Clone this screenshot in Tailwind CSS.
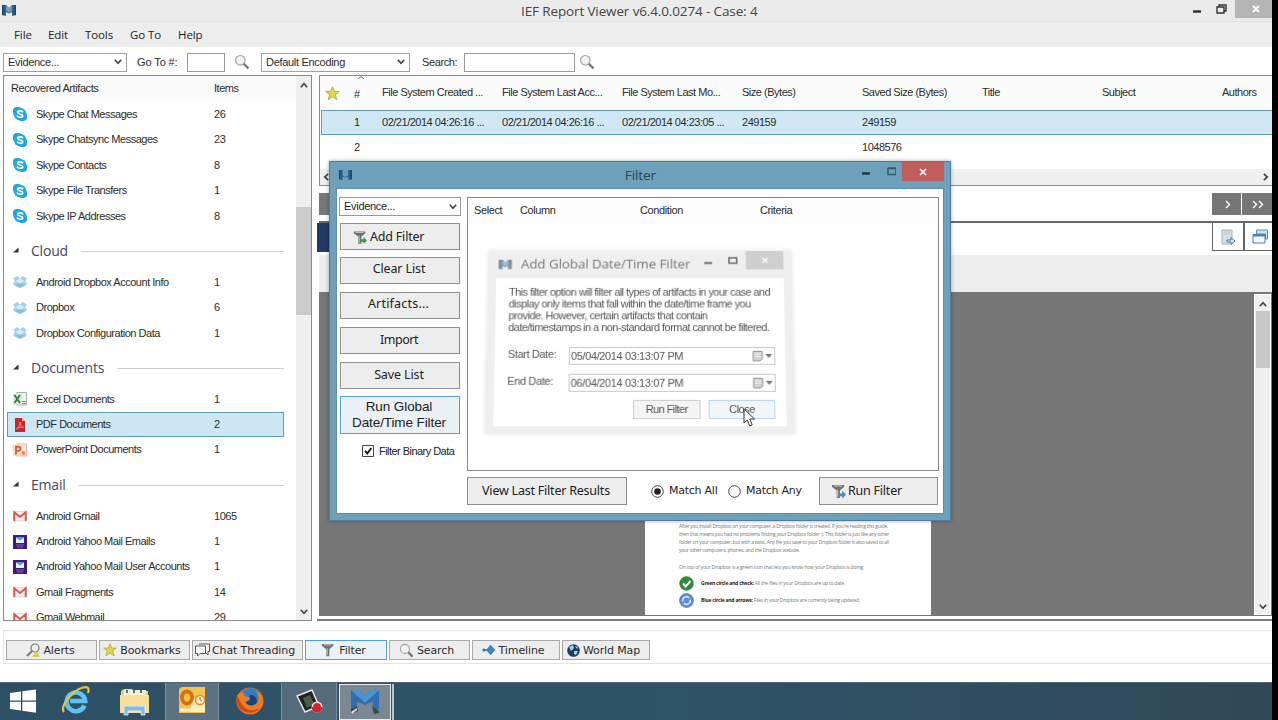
<!DOCTYPE html>
<html lang="en">
<head>
  <meta charset="UTF-8" />
  <meta name="viewport" content="width=device-width, initial-scale=1.0"/>
  <title>IEF Report Viewer v6.4.0.0274 - Case: 4</title>
  <script src="https://cdn.jsdelivr.net/npm/@tailwindcss/browser@4"></script>
</head>
<body class="w-[1278px] h-[720px] overflow-hidden bg-black font-['Liberation_Sans',sans-serif] text-[11px] leading-none tracking-[-0.480px] text-[#2b2b2b]">

  <!-- icon sprite -->
  <svg class="hidden">
    <symbol id="logo" viewBox="0 0 14 13"><path d="M0 1h4l3 3 3-3h4v10l-4 1V8L7 9.500 4 8v4l-4-1z" fill="#2f5f85"/><path d="M0 1h1.500v10.300L0 11zM12.500 1H14v10l-1.500.3z" fill="#24445f"/><path d="M4 1l3 3 3-3v5.500L7 9 4 6.500z" fill="#6d9fc4"/></symbol>
    <symbol id="skype" viewBox="0 0 14 14"><rect x="0" y="0" width="9" height="9" rx="4" fill="#1aa3dd"/><rect x="5" y="5" width="9" height="9" rx="4" fill="#1aa3dd"/><circle cx="7" cy="7" r="6.3" fill="#22a9e0"/><path d="M9.600 4.800C9 3.600 4.700 3.400 4.700 5.300c0 2.100 5 1.100 5 3.400 0 2-4.600 2-5.400.3" fill="none" stroke="#fff" stroke-width="1.600" stroke-linecap="round"/></symbol>
    <symbol id="dropbox" viewBox="0 0 14 14"><path d="M4.200 1L7 3.300 9.800 1 14 3.700 12 6l1.500 2v2L7 13.200.5 10V8L2 6 0 3.700z" fill="#a3d0ec"/><path d="M7 3.300L11.500 6 7 8.800 2.500 6z" fill="#d5ecf9"/><path d="M2 9.500l5-1 5 1-5 3z" fill="#86bfe2"/></symbol>
    <symbol id="excel" viewBox="0 0 14 14"><rect x="4" y=".5" width="9.500" height="12.500" fill="#f1f6f1" stroke="#8aa88a" stroke-width=".8"/><path d="M0 2l9-1v10l-9 2z" fill="#dcebd9"/><path d="M1.500 3l5.500 8M7 3l-5.500 8" stroke="#2f7d3a" stroke-width="1.800"/><path d="M9 9.500h4M9 11.500h4" stroke="#5e9b62"/></symbol>
    <symbol id="pdf" viewBox="0 0 14 14"><path d="M2 0h7l3 3v11H2z" fill="#c9252b"/><path d="M9 0l3 3H9z" fill="#f3b8b8"/><path d="M3.500 11c2-1 4-5 3.500-7 0 2 1 4.500 3.500 5.300-2.500-.6-5 .4-7 1.700z" fill="none" stroke="#eb9a9a" stroke-width=".9"/></symbol>
    <symbol id="ppt" viewBox="0 0 14 14"><rect x="4" y="1" width="9.500" height="12" fill="#fbe9e0" stroke="#e5a283" stroke-width=".8"/><path d="M0 2l9-1v11l-9 1z" fill="#fbd9c8"/><path d="M3 11.500V3.700h2.300a2 2 0 010 4.300H3" fill="none" stroke="#d4572a" stroke-width="1.700"/><circle cx="10.500" cy="10" r="2" fill="#e58a5f"/></symbol>
    <symbol id="gmail" viewBox="0 0 14 14"><rect x=".5" y="2.500" width="13" height="9.500" fill="#f7f0ef" stroke="#d9c3c0" stroke-width=".6"/><path d="M1.300 12V3.200L7 8l5.700-4.800V12" fill="none" stroke="#d9574c" stroke-width="1.900"/></symbol>
    <symbol id="yahoo" viewBox="0 0 14 14"><rect width="14" height="14" fill="#3d1b7c"/><rect x="3" y="2.500" width="8" height="5.500" fill="#e6f2fb"/><path d="M3 2.500l4 3 4-3z" fill="#43a0dc"/><path d="M3 10h8M4 12h6" stroke="#8a70bd" stroke-width=".9"/></symbol>
    <symbol id="mag" viewBox="0 0 16 16"><path d="M9.500 9.500l5 5" stroke="#777" stroke-width="2.400"/><circle cx="6.300" cy="6.300" r="4.800" fill="#edf2f5" stroke="#a3a3a3" stroke-width="1.200"/><path d="M3.800 6a2.600 2.600 0 012.500-2.500" stroke="#fff" fill="none"/></symbol>
    <symbol id="star" viewBox="0 0 16 16"><path d="M8 .8l2 5h5.300l-4.200 3.400 1.600 5.500L8 11.500l-4.700 3.200 1.600-5.500L.7 5.800H6z" fill="#e3d843" stroke="#a9a13a" stroke-width=".8"/></symbol>
    <symbol id="funnel" viewBox="0 0 16 16"><path d="M1 1h13v2L9.500 7v8H6V7L1 3z" fill="#6f6f6f"/><path d="M3 2.200h9M7 6v8" stroke="#d5d5d5"/></symbol>
    <symbol id="down" viewBox="0 0 8 6"><path d="M.8 .8L4 4.300 7.200 .8" fill="none" stroke="#444" stroke-width="1.700"/></symbol>
    <symbol id="cal" viewBox="0 0 22 12"><path d="M1 1.500h9V9l-2 2H1z" fill="#c9c9c9" stroke="#777"/><path d="M2 4h7M2 6.500h7" stroke="#eee"/><path d="M13 4h7l-3.500 4z" fill="#555"/></symbol>
  </svg>

  <div class="w-[1272px] h-[720px] flex flex-col bg-white overflow-hidden">

    <!-- title bar -->
    <header class="relative h-[22px] shrink-0 bg-[#ebebeb] border-b border-[#e2e2e2] flex items-start justify-between pl-[2px]">
      <svg class="w-[14px] h-[13px] mt-[4px]"><use href="#logo"/></svg>
      <h1 class="absolute left-[521px] top-[5px] font-['Open_Sans',sans-serif] text-[13.500px] tracking-[-0.130px] text-[#444] whitespace-nowrap">IEF Report Viewer v6.4.0.0274 - Case: 4</h1>
      <div class="flex items-start">
        <svg class="w-[8px] h-[14px] mr-[15px]" viewBox="0 0 8 14"><path d="M0 11.500h8" stroke="#333" stroke-width="2.500"/></svg>
        <svg class="w-[11px] h-[14px] mr-[8px]" viewBox="0 0 11 14"><path d="M3 7V5h7v6H8M1 7h7v6H1z" fill="none" stroke="#333" stroke-width="1.400"/></svg>
        <div class="w-[37px] h-[18px] bg-[#b5b5b5] flex items-center pl-[17px]"><svg class="w-[8px] h-[8px]" viewBox="0 0 8 8"><path d="M1 1l6 6M7 1L1 7" stroke="#fff" stroke-width="1.800"/></svg></div>
      </div>
    </header>

    <!-- menu -->
    <nav class="h-[25px] shrink-0 bg-[#ededed] flex items-center pl-[14px] font-['Open_Sans',sans-serif] text-[11.500px] tracking-[-0.1px] text-[#222]">
      <span class="w-[34px]">File</span><span class="w-[37px]">Edit</span><span class="w-[45px]">Tools</span><span class="w-[48px]">Go To</span><span>Help</span>
    </nav>

    <!-- toolbar -->
    <div class="h-[28px] shrink-0 flex items-center pl-[3px]">
      <div class="w-[124px] h-[19px] mt-[2px] border border-[#a0a0a0] flex items-center justify-between pl-[4px] pr-[4px]"><span class="tracking-[-0.3px]">Evidence...</span><svg class="w-[8px] h-[6px]"><use href="#down"/></svg></div>
      <span class="ml-[10px] mt-[3px] w-[50px] tracking-[-0.1px]">Go To #:</span>
      <div class="w-[38px] h-[19px] mt-[2px] border border-[#999]"></div>
      <svg class="w-[16px] h-[16px] ml-[9px] mt-[2px]"><use href="#mag"/></svg>
      <div class="ml-[11px] w-[149px] h-[19px] mt-[2px] border border-[#a0a0a0] flex items-center justify-between pl-[4px] pr-[4px]"><span class="tracking-[-0.3px]">Default Encoding</span><svg class="w-[8px] h-[6px]"><use href="#down"/></svg></div>
      <span class="ml-[12px] mt-[3px] w-[42px] tracking-[-0.380px]">Search:</span>
      <div class="w-[111px] h-[19px] mt-[2px] border border-[#999]"></div>
      <svg class="w-[16px] h-[16px] ml-[4px] mt-[2px]"><use href="#mag"/></svg>
    </div>

    <main class="h-[546px] shrink-0 flex pl-[3px]">
      <!-- artifact tree -->
      <aside class="w-[309px] h-[546px] border border-[#8a8a8a] flex overflow-hidden">
        <div class="flex-1 overflow-hidden">
          <div class="h-[25.800px] bg-[#fafafa] flex items-center pl-[7px]"><span class="w-[203px] tracking-[-0.420px]">Recovered Artifacts</span><span>Items</span></div>
          <div id="tree"></div>
        </div>
        <div class="w-[15px] bg-[#f0f0f0] flex flex-col items-center">
          <svg class="w-[8px] h-[6px] mt-[6px] rotate-180"><use href="#down"/></svg>
          <div class="w-full h-[108px] mt-[119px] bg-[#cbcbcb]"></div>
          <svg class="w-[8px] h-[6px] mt-auto mb-[5px]"><use href="#down"/></svg>
        </div>
      </aside>

      <section class="ml-[5px] w-[955px] h-[546px] flex flex-col">
        <!-- report grid -->
        <div class="ml-[2px] h-[111px] border-y border-l border-[#8a8a8a] flex flex-col overflow-hidden">
          <div class="h-[34px] bg-[#fbfbfb] flex items-center">
            <svg class="w-[15px] h-[15px] ml-[5px] mr-[14px] shrink-0"><use href="#star"/></svg>
            <span class="relative w-[21px] shrink-0 pt-[2px] mr-[7px]"><svg class="absolute left-[4px] -top-[11px] w-[6px] h-[3px]" viewBox="0 0 6 3"><path d="M0 3l3-2.500L6 3" fill="none" stroke="#666"/></svg>#</span>
            <div id="heads" class="flex pb-[1px]"></div>
          </div>
          <div class="h-[25px] border border-r-0 border-[#5f9db5] bg-[#cfe8f3] flex items-center ml-[1px]"><span class="w-[60px] pl-[32px]">1</span><div id="row1" class="flex"></div></div>
          <div class="h-[25px] flex items-center pl-[2px]"><span class="w-[60px] pl-[32px]">2</span><div id="row2" class="flex"></div></div>
          <div class="mt-auto h-[16px] bg-[#f0f0f0] flex items-center justify-between pl-[2px] pr-[2px]">
            <svg class="w-[8px] h-[6px] rotate-90"><use href="#down"/></svg>
            <svg class="w-[8px] h-[6px] -rotate-90"><use href="#down"/></svg>
          </div>
        </div>

        <!-- record navigation -->
        <div class="h-[37px] border-b-2 border-[#696969] flex items-center ml-[2px]">
          <div class="w-[200px] h-[22px] bg-[#777]"></div>
          <div class="ml-auto w-[29px] h-[22px] mt-[1px] bg-[#757575] flex items-center justify-center"><svg class="w-[6px] h-[9px] ml-[3px]" viewBox="0 0 6 9"><path d="M1 1l3.500 3.500L1 8" fill="none" stroke="#fff" stroke-width="1.400"/></svg></div>
          <div class="ml-[1px] w-[30px] h-[22px] mt-[1px] bg-[#757575] flex items-center justify-center"><svg class="w-[12px] h-[9px] ml-[2px]" viewBox="0 0 12 9"><path d="M1 1l3.500 3.500L1 8M7 1l3.500 3.500L7 8" fill="none" stroke="#fff" stroke-width="1.400"/></svg></div>
        </div>
        <div class="h-[32px] flex">
          <div class="w-[200px] h-[29px] bg-[#1f3a66]"></div>
          <div class="ml-auto w-[32px] h-[28px] border border-t-0 border-[#666] flex items-center justify-center">
            <svg class="w-[15px] h-[16px]" viewBox="0 0 15 16"><path d="M1 1h10v14H1z" fill="#d4dfe8" stroke="#9fb0bf"/><path d="M3 3h6M3 5h6" stroke="#b7c6d2"/><path d="M6 11h4V8.500l4 3.500-4 3.500V13H6z" fill="#cfe8fa" stroke="#3a7cab"/></svg>
          </div>
          <div class="w-[28px] h-[28px] border-b border-l border-[#666] flex items-center pl-[7px]">
            <svg class="w-[16px] h-[15px]" viewBox="0 0 16 15"><path d="M4.500 1h11v9h-2V5h-9z" fill="#cbe2f3" stroke="#4d8fbd"/><path d="M1 5.500h12v8.500H1z" fill="#f4f9fd" stroke="#4d7fa6"/><path d="M1 6.500h12" stroke="#3f86bb" stroke-width="2"/></svg>
          </div>
        </div>
        <div class="h-[37px] bg-[#ededed] ml-[2px]"></div>

        <!-- document preview -->
        <div class="h-[324px] bg-[#777] ml-[2px] flex items-end pl-[326px]">
          <article class="w-[286px] h-[320px] mb-[1px] bg-white pl-[34px] pb-[2px] flex flex-col justify-end font-['Open_Sans',sans-serif] text-[5px] leading-[8.300px] tracking-[-0.240px] text-[#777] whitespace-nowrap">
            <p>After you install Dropbox on your computer, a Dropbox folder is created. If you're reading this guide,</p>
            <p>then that means you had no problems finding your Dropbox folder :). This folder is just like any other</p>
            <p>folder on your computer, but with a twist. Any file you save to your Dropbox folder is also saved to all</p>
            <p>your other computers, phones, and the Dropbox website.</p>
            <p class="mt-[8px] tracking-[-0.180px]">On top of your Dropbox is a green icon that lets you know how your Dropbox is doing:</p>
            <div class="flex items-center h-[17px] mt-[4px] tracking-[-0.220px]">
              <svg class="w-[15px] h-[15px] mr-[7px]" viewBox="0 0 15 15"><circle cx="7.500" cy="7.500" r="7.200" fill="#2f8b3a"/><path d="M4 7.500l2.700 3L11.500 5" fill="none" stroke="#fff" stroke-width="2"/></svg>
              <p><b class="text-[#222]">Green circle and check:</b> All the files in your Dropbox are up to date.</p>
            </div>
            <div class="flex items-center h-[17px] mb-[4px] tracking-[-0.220px]">
              <svg class="w-[15px] h-[15px] mr-[7px]" viewBox="0 0 15 15"><circle cx="7.500" cy="7.500" r="7" fill="#5d8be0" stroke="#476cb8" stroke-width=".6"/><path d="M3.800 8.300a3.700 3.700 0 016.300-3.400M11.200 6.700a3.700 3.700 0 01-6.300 3.400" fill="none" stroke="#dbe8fd" stroke-width="1.600"/></svg>
              <p><b class="text-[#222]">Blue circle and arrows:</b> Files in your Dropbox are currently being updated.</p>
            </div>
          </article>
          <div class="ml-auto mr-[1px] mb-[1px] w-[17px] h-[321px] bg-[#f0f0f0] border border-white flex flex-col items-center">
            <svg class="w-[8px] h-[6px] mt-[6px] rotate-180"><use href="#down"/></svg>
            <div class="w-[14px] h-[57px] mt-[4px] bg-[#c8c8c8]"></div>
            <svg class="w-[8px] h-[6px] mt-auto mb-[4px]"><use href="#down"/></svg>
          </div>
        </div>
        <div class="mt-[3px] h-[2px] bg-[#7d7d7d]"></div>
      </section>
    </main>

    <!-- bottom tabs -->
    <div class="mt-[9px] ml-[3px] h-[34px] shrink-0 border border-r-0 border-[#e3e3e3] flex items-center gap-[2px] pl-[2px] pt-[6px] font-['DejaVu_Sans',sans-serif] text-[11px] tracking-[-0.120px]">
      <div class="w-[91px] h-[20px] bg-[#ededed] border border-[#a9a9a9] flex items-center justify-center gap-[2px] pr-[2px]">
        <svg class="w-[15px] h-[15px]" viewBox="0 0 15 15"><circle cx="9" cy="5" r="4" fill="#eee" stroke="#777" stroke-width="1.200"/><path d="M6 8l-5 5" stroke="#777" stroke-width="2"/><path d="M10 8l4 6H6z" fill="#d9cf4a"/></svg>Alerts</div>
      <div class="w-[91px] h-[20px] bg-[#ededed] border border-[#a9a9a9] flex items-center justify-center gap-[3px] pr-[5px]"><svg class="w-[14px] h-[14px] shrink-0"><use href="#star"/></svg>Bookmarks</div>
      <div class="w-[111px] h-[20px] bg-[#ededed] border border-[#a9a9a9] flex items-center justify-center gap-[2px] pr-[5px] whitespace-nowrap">
        <svg class="w-[15px] h-[14px] shrink-0" viewBox="0 0 15 14"><path d="M4 1h10.500v7.500H13V12l-2-2" fill="#f5f5f5" stroke="#555"/><path d="M.5 3h10v7.500H5L2.500 13v-2.500h-2z" fill="#fafafa" stroke="#555"/></svg>Chat Threading</div>
      <div class="w-[82px] h-[20px] bg-[#eaf2fa] border border-[#569de5] flex items-center justify-center gap-[4px] pr-[5px]"><svg class="w-[14px] h-[14px]"><use href="#funnel"/></svg>Filter</div>
      <div class="w-[81px] h-[20px] bg-[#ededed] border border-[#a9a9a9] flex items-center justify-center gap-[3px] pr-[6px]"><svg class="w-[15px] h-[15px]"><use href="#mag"/></svg>Search</div>
      <div class="w-[88px] h-[20px] bg-[#ededed] border border-[#a9a9a9] flex items-center justify-center gap-[3px] pr-[6px]">
        <svg class="w-[14px] h-[12px]" viewBox="0 0 14 12"><path d="M2 6h10" stroke="#2f6fa8" stroke-width="1.500"/><path d="M8.500 .8L13.500 6l-5 5.200L4 6z" fill="#3f86c2"/><circle cx="2" cy="6" r="1.600" fill="#2f6fa8"/></svg>Timeline</div>
      <div class="w-[88px] h-[20px] bg-[#ededed] border border-[#a9a9a9] flex items-center justify-center gap-[3px] pr-[5px] whitespace-nowrap">
        <svg class="w-[13px] h-[13px] shrink-0" viewBox="0 0 13 13"><circle cx="6.500" cy="6.500" r="6.300" fill="#173f63"/><path d="M2 3l4-2 1 3-3 3zM7 7l4 0-2 4-2-1zM8 2l3 1-1 2z" fill="#a9cfe6"/></svg>World Map</div>
    </div>

    <!-- taskbar -->
    <footer class="mt-auto h-[38px] shrink-0 bg-linear-to-r from-[#2e5064] via-[#2f546a] to-[#2f4858] border-t border-[#54646f] flex items-center">
      <svg class="w-[26px] h-[24px] ml-[10px] mb-[2px]" viewBox="0 0 26 24"><path d="M0 4l11-1.500v9H0zM12.300 2.300L26 .5v11H12.300zM0 12.800h11v8.700L0 20zM12.300 12.800H26v11l-13.700-2z" fill="#fff"/></svg>
      <svg class="w-[30px] h-[30px] ml-[25px] mb-[4px]" viewBox="0 0 30 30"><path d="M23.500 20.500A9.300 9.300 0 1124.200 16H9" fill="none" stroke="#5cc3f2" stroke-width="4.600"/><path d="M3 27C-1 22 10 6 22 2.500c5-1.500 6.500 1 5 5.500" fill="none" stroke="#e9c43f" stroke-width="2.200"/></svg>
      <svg class="w-[31px] h-[30px] ml-[28px]" viewBox="0 0 31 30"><path d="M2 4l3-2h8l2 2h14v22H2z" fill="#e9cf77"/><path d="M5 3h22v5H5z" fill="#f4f0dc"/><path d="M8 3v3M15 3v3M22 3v3" stroke="#5b7a5b" stroke-width="2"/><path d="M1 8h29v18H1z" fill="#f5df95"/><path d="M5 28v-9h21v9h-4v-4H9v4z" fill="#7fbde6" stroke="#e3f2fb" stroke-width=".8"/></svg>
      <div class="w-[54px] h-full ml-[15px] bg-[#5b7381] border-x border-[#7b909c] flex items-center justify-center pb-[4px]">
        <svg class="w-[28px] h-[28px]" viewBox="0 0 28 28"><path d="M1 3l3-2h23v26H1z" fill="#f3c54c"/><path d="M13 12h14v14H13z" fill="#fbeab8"/><path d="M2 24l24 0" stroke="#fdf3d5" stroke-width="3"/><ellipse cx="9" cy="11.500" rx="5" ry="6" fill="none" stroke="#d96f1b" stroke-width="4"/><circle cx="22" cy="14" r="4.500" fill="#fff3d6" stroke="#e08a28" stroke-width="1.500"/><path d="M22 11v3l2 1" stroke="#b55d12" fill="none"/></svg>
      </div>
      <svg class="w-[28px] h-[28px] ml-[17px] mb-[2px]" viewBox="0 0 28 28"><circle cx="14" cy="14" r="13.500" fill="#e36c1b"/><circle cx="14.500" cy="11" r="10" fill="#2f7fc5"/><path d="M1 9c2-4 5-4 7-3-1 3 1 4 5 4 2 1-1 4-4 4 1 5 8 6 12 2 3-4 1-9-1-12 5 2 7.500 7 7 11-1 8-7 12-13 12C5 27-1 19 1 9z" fill="#ee7d1e"/><path d="M13 9c4-3 8 1 8 6-3 5-9 4-11 0 3 0 6-2 3-6z" fill="#1d4177"/><path d="M1 9c-1 6 1 12 6 15 6 3 13 2 17-3-5 3-12 3-16-1S4 12 1 9z" fill="#d2481a"/></svg>
      <div class="w-[56px] h-full ml-[17px] bg-[#536b7a] border-x border-[#7b909c] flex items-center justify-center pb-[2px]">
        <svg class="w-[28px] h-[26px]" viewBox="0 0 28 26"><path d="M2 8L17 2l7 16-14 6z" fill="#222" stroke="#e8e8e8" stroke-width="1.500"/><path d="M8 10l7-3 4 9-7 4z" fill="#45604a"/><circle cx="22" cy="19" r="5.500" fill="#e9e9e9"/><path d="M16.500 19a5.500 5.500 0 0011 0z" fill="#d2232a"/><circle cx="22" cy="19" r="4" fill="#d2232a"/></svg>
      </div>
      <div class="w-[52px] h-[36px] ml-[2px] bg-[#7b8791] border border-[#e6ebee] flex items-center justify-center">
        <svg class="w-[30px] h-[26px]" viewBox="0 0 30 26"><path d="M1 1h8l6 6 6-6h8v19l-6 2V13l-4 1-4 2-4-2-4-1v9l-6-2z" fill="#2f6fae"/><path d="M1 1h8l6 6 6-6h8L15 14z" fill="#4c93cf"/><path d="M1 20l6-3 1 5-7 3zM22 17l7 5v2l-5 1z" fill="#3a4650"/><path d="M1 23l6-4v2l-5 4z" fill="#d9dee2"/></svg>
      </div>
      <div class="w-[2px] h-[36px] ml-[1px] bg-[#b9c4cb]"></div>
    </footer>
  </div>

  <!-- filter window -->
  <div class="absolute left-[329px] top-[161px] w-[622px] h-[360px] bg-[#6ca0bb] border border-[#4c7e98] shadow-[0_0_4px_rgba(0,0,0,0.35)] px-[6px] pb-[6px] flex flex-col">
    <div class="h-[26px] shrink-0 flex items-start">
      <svg class="w-[15px] h-[12px] mt-[7px] ml-[2px]"><use href="#logo"/></svg>
      <span class="ml-[272px] mt-[7px] w-[236px] font-['Open_Sans',sans-serif] text-[13.500px] font-medium tracking-[-0.1px] text-[#2f4350]">Filter</span>
      <svg class="w-[8px] h-[14px] mr-[17px] ml-[3px]" viewBox="0 0 8 14"><path d="M0 11.500h8" stroke="#24343f" stroke-width="2.500"/></svg>
      <svg class="w-[10px] h-[14px] mr-[6px]" viewBox="0 0 10 14"><path d="M1 6.500h8v6H1zM1 6h8" fill="none" stroke="#35586b" stroke-width="1.500"/></svg>
      <div class="w-[42px] h-[19px] bg-[#c15c5c] flex items-center justify-center"><svg class="w-[8px] h-[8px]" viewBox="0 0 8 8"><path d="M1 1l6 6M7 1L1 7" stroke="#fff" stroke-width="1.700"/></svg></div>
    </div>
    <div class="flex-1 bg-white border border-[#5f8ea8] flex pt-[8px] pl-[2px]">
      <div class="w-[122px] flex flex-col font-['Noto_Sans',sans-serif] text-[12.500px] tracking-[-0.120px] text-[#222]">
        <div class="h-[19px] border border-[#999] flex items-center justify-between pl-[4px] pr-[3px] font-['Liberation_Sans',sans-serif] text-[11px] tracking-[-0.3px]">Evidence...<svg class="w-[8px] h-[6px]"><use href="#down"/></svg></div>
        <div class="mt-[7px] mx-[1px] h-[27px] border border-[#8f8f8f] bg-[#ededed] flex items-center pl-[12px] pt-[1px] gap-[3px]">
          <svg class="w-[14px] h-[15px]" viewBox="0 0 16 16"><path d="M1 1h13v2L9.500 7v8H6V7L1 3z" fill="#6f6f6f"/><path d="M3 2.200h9M7 6v8" stroke="#d5d5d5"/><path d="M8 10h4V7l4 4.500-4 4V13H8z" fill="#3f9b45"/></svg><span class="tracking-[-0.2px]">Add Filter</span></div>
        <div class="mt-[7px] mx-[1px] h-[27px] border border-[#8f8f8f] bg-[#ededed] flex items-center justify-center pb-[2px] pr-[2px]">Clear List</div>
        <div class="mt-[8px] mx-[1px] h-[27px] border border-[#8f8f8f] bg-[#ededed] flex items-center justify-center pb-[2px] pr-[3px] tracking-[0.2px]">Artifacts...</div>
        <div class="mt-[8px] mx-[1px] h-[27px] border border-[#8f8f8f] bg-[#ededed] flex items-center justify-center pr-[2px] tracking-[-0.5px]">Import</div>
        <div class="mt-[8px] mx-[1px] h-[27px] border border-[#8f8f8f] bg-[#ededed] flex items-center justify-center pr-[2px]">Save List</div>
        <div class="mt-[7px] mx-[1px] h-[38px] border border-[#569de5] bg-[#ebf1f7] flex items-center justify-center text-center pr-[2px] font-['Liberation_Sans',sans-serif] text-[13.500px] leading-[16px] tracking-[-0.1px]">Run Global<br>Date/Time Filter</div>
        <div class="mt-[11px] ml-[23px] flex items-center font-['Liberation_Sans',sans-serif] text-[11px] tracking-[-0.540px] whitespace-nowrap">
          <svg class="w-[12px] h-[12px] mr-[5px]" viewBox="0 0 12 12"><path d="M.5 .5h11v11H.5z" fill="#fff" stroke="#444"/><path d="M3 5.800l2.300 2.700L9.300 3" fill="none" stroke="#111" stroke-width="1.800"/></svg>Filter Binary Data</div>
      </div>
      <div class="ml-[6px] w-[472px] flex flex-col">
        <div class="h-[274px] border border-[#8a8a8a]">
          <div class="h-[25px] flex items-center pl-[6px] bg-[#fdfdfd] tracking-[-0.4px]"><span class="w-[46px]">Select</span><span class="w-[120px]">Column</span><span class="w-[120px]">Condition</span><span>Criteria</span></div>
        </div>
        <div class="mt-[6px] flex items-center font-['Noto_Sans',sans-serif] text-[12.500px] tracking-[-0.220px] text-[#222]">
          <div class="w-[160px] h-[28px] border border-[#8f8f8f] bg-[#ededed] flex items-center justify-center pr-[2px]">View Last Filter Results</div>
          <svg class="w-[13px] h-[13px] ml-[24px] mr-[5px]" viewBox="0 0 13 13"><circle cx="6.500" cy="6.500" r="5.800" fill="#fff" stroke="#444"/><circle cx="6.500" cy="6.500" r="3.300" fill="#222"/></svg>
          <span class="w-[59px] pb-[1px] font-['DejaVu_Sans',sans-serif] text-[11px] tracking-[-0.250px]">Match All</span>
          <svg class="w-[13px] h-[13px] mr-[5px]" viewBox="0 0 13 13"><circle cx="6.500" cy="6.500" r="5.800" fill="#fff" stroke="#444"/></svg>
          <span class="w-[73px] pb-[1px] font-['DejaVu_Sans',sans-serif] text-[11px] tracking-[-0.250px]">Match Any</span>
          <div class="w-[119px] h-[28px] border border-[#8f8f8f] bg-[#ededed] flex items-center pl-[11px] gap-[2px]">
            <svg class="w-[15px] h-[15px]" viewBox="0 0 16 16"><path d="M1 1h13v2L9.500 7v8H6V7L1 3z" fill="#6f6f6f"/><path d="M3 2.200h9M7 6v8" stroke="#d5d5d5"/><path d="M8 10h4V7l4 4.500-4 4V13H8z" fill="#3f8fc6"/></svg>Run Filter</div>
        </div>
      </div>
    </div>
  </div>

  <!-- global date filter, fading out as it closes -->
  <div class="absolute left-[487px] top-[249px] w-[306px] h-[184px] bg-[#efefef] [transform:perspective(1000px)_rotateX(8deg)] shadow-[0_0_5px_rgba(0,0,0,0.12)] flex flex-col text-[#555] px-[8px] pb-[7px]">
    <div class="h-[28px] shrink-0 flex items-start">
      <svg class="w-[14px] h-[12px] mt-[8px] ml-[2px] opacity-60"><use href="#logo"/></svg>
      <span class="ml-[9px] mt-[7px] w-[184px] whitespace-nowrap font-['Open_Sans',sans-serif] text-[13.500px] tracking-[-0.080px] text-[#777]">Add Global Date/Time Filter</span>
      <svg class="w-[8px] h-[14px] mr-[16px] ml-[5px]" viewBox="0 0 8 14"><path d="M0 12.500h8" stroke="#666" stroke-width="2"/></svg>
      <svg class="w-[10px] h-[14px] mr-[8px]" viewBox="0 0 10 14"><path d="M1 7h8v5.500H1z" fill="none" stroke="#666" stroke-width="1.500"/></svg>
      <div class="w-[38px] h-[19px] bg-[#cfcfcf] flex items-center justify-center shrink-0"><svg class="w-[7px] h-[7px]" viewBox="0 0 8 8"><path d="M1 1l6 6M7 1L1 7" stroke="#f7f7f7" stroke-width="1.700"/></svg></div>
    </div>
    <div class="flex-1 bg-white pl-[13px] pt-[8px]">
      <p class="leading-[12px] tracking-[-0.540px] whitespace-nowrap">This filter option will filter all types of artifacts in your case and<br>display only items that fall within the date/time frame you<br>provide. However, certain artifacts that contain<br>date/timestamps in a non-standard format cannot be filtered.</p>
      <div class="mt-[14px] flex items-center tracking-[-0.380px]"><span class="w-[61px] pb-[4px]">Start Date:</span><div class="w-[206px] h-[18px] border border-[#c9c9c9] flex items-center justify-between pl-[1px]">05/04/2014 03:13:07 PM<svg class="w-[22px] h-[12px] opacity-80"><use href="#cal"/></svg></div></div>
      <div class="mt-[9px] flex items-center tracking-[-0.380px]"><span class="w-[61px] pb-[4px]">End Date:</span><div class="w-[206px] h-[18px] border border-[#c9c9c9] flex items-center justify-between pl-[1px]">06/04/2014 03:13:07 PM<svg class="w-[22px] h-[12px] opacity-80"><use href="#cal"/></svg></div></div>
      <div class="mt-[8px] ml-[125px] flex gap-[8px]">
        <div class="w-[67px] h-[19px] border border-[#cfcfcf] bg-[#f4f4f4] flex items-center justify-center tracking-[-0.6px]">Run Filter</div>
        <div class="w-[66px] h-[19px] border border-[#b9d5ee] bg-[#f1f6fa] flex items-center justify-center tracking-[-0.5px]">Close</div>
      </div>
    </div>
  </div>

  <svg class="absolute left-[743px] top-[408px] w-[13px] h-[20px]" viewBox="0 0 13 20"><path d="M1 1v14l3.300-3 2.400 5.800 2.500-1L6.800 11h4.700z" fill="#fff" stroke="#333"/></svg>

  <script>
    const tree = document.getElementById('tree');

    const groups = [
      { items: [['skype', 'Skype Chat Messages', 26], ['skype', 'Skype Chatsync Messages', 23], ['skype', 'Skype Contacts', 8], ['skype', 'Skype File Transfers', 1], ['skype', 'Skype IP Addresses', 8]] },
      { name: 'Cloud', items: [['dropbox', 'Android Dropbox Account Info', 1], ['dropbox', 'Dropbox', 6], ['dropbox', 'Dropbox Configuration Data', 1]] },
      { name: 'Documents', items: [['excel', 'Excel Documents', 1], ['pdf', 'PDF Documents', 2], ['ppt', 'PowerPoint Documents', 1]] },
      { name: 'Email', items: [['gmail', 'Android Gmail', 1065], ['yahoo', 'Android Yahoo Mail Emails', 1], ['yahoo', 'Android Yahoo Mail User Accounts', 1], ['gmail', 'Gmail Fragments', 14], ['gmail', 'Gmail Webmail', 29]] }
    ];

    groups.forEach(group => {
      if (group.name) {
        tree.innerHTML += `
          <div class="h-[40.800px] pt-[4px] flex items-center pl-[9px] pr-[12px]">
            <svg class="w-[6px] h-[6px] mr-[12px] mb-[2px]" viewBox="0 0 7 6"><path d="M6.500 0v6H0z" fill="#333"/></svg>
            <span class="font-['Open_Sans',sans-serif] text-[14px] tracking-[-0.2px] text-[#454562]">${group.name}</span>
            <div class="ml-[13px] flex-1 h-px bg-[#cdcdcd]"></div>
          </div>`;
      }
      group.items.forEach(([icon, label, count]) => {
        const state = icon === 'pdf' ? 'border-[#5f9db5] bg-[#cde7f5]' : 'border-transparent';
        tree.innerHTML += `
          <div class="h-[25.400px] ml-[3px] mr-[12px] border ${state} flex items-center pl-[5px]">
            <svg class="w-[14px] h-[14px] mr-[9px]"><use href="#${icon}"/></svg>
            <span class="w-[178px] whitespace-nowrap">${label}</span><span>${count}</span>
          </div>`;
      });
    });

    const cells = list => list.map(text => `<span class="w-[120px] shrink-0 whitespace-nowrap">${text}</span>`).join('');
    document.getElementById('heads').innerHTML = cells(['File System Created ...', 'File System Last Acc...', 'File System Last Mo...', 'Size (Bytes)', 'Saved Size (Bytes)', 'Title', 'Subject', 'Authors']);
    document.getElementById('row1').innerHTML = cells(['02/21/2014 04:26:16 ...', '02/21/2014 04:26:16 ...', '02/21/2014 04:23:05 ...', '249159', '249159']);
    document.getElementById('row2').innerHTML = cells(['', '', '', '', '1048576']);
  </script>
</body>
</html>
